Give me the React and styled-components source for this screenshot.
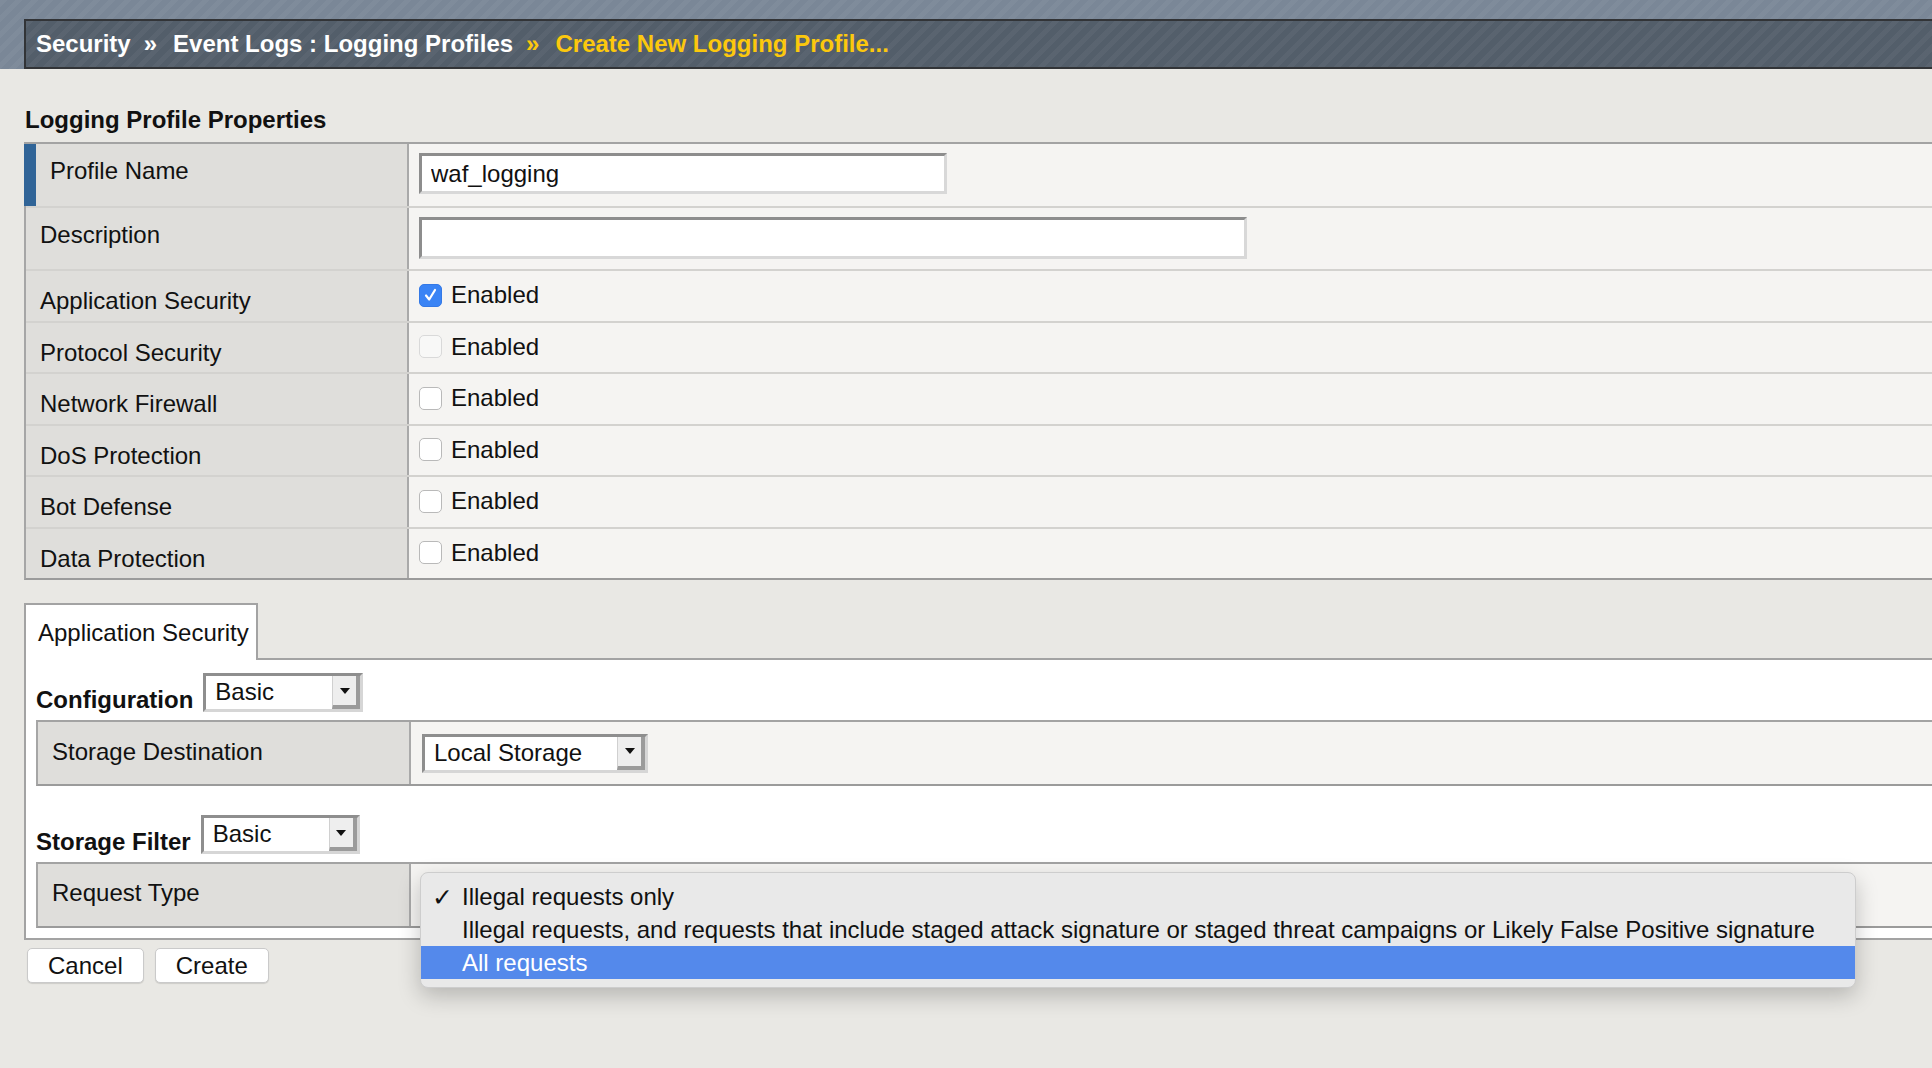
import React from 'react';
import styled, { createGlobalStyle } from 'styled-components';

const GlobalStyle = createGlobalStyle`
    html, body {
        margin: 0;
        padding: 0;
    }
    body {
        min-height: 100vh;
        background: #e9e8e4;
        font-family: "Liberation Sans", Arial, Helvetica, sans-serif;
        font-size: 24px;
        color: #111;
    }
    #root {
        min-height: 100vh;
    }
`;

const stripes = 'repeating-linear-gradient(135deg, rgba(255,255,255,0.04) 0 5px, rgba(255,255,255,0) 5px 11px)';

const Header = styled.header`
    height: 69px;
    box-sizing: border-box;
    padding: 19px 0 0 24px;
    background: ${stripes}, #7a8797;
`;

const Crumbs = styled.nav`
    height: 50px;
    box-sizing: border-box;
    display: flex;
    align-items: center;
    padding-left: 10px;
    background: ${stripes}, #535e6a;
    border: 2px solid #323437;
    border-right: none;
    color: #fff;
    font-weight: bold;
    white-space: nowrap;
`;

const Sep = styled.span`
    margin: 0 16px 0 13px;
    color: ${p => (p.$current ? '#fcc80d' : '#fff')};
`;

const Current = styled.span`
    color: #fcc80d;
`;

const Main = styled.main`
    padding-left: 24px;
`;

const Title = styled.h2`
    margin: 37px 0 8px 1px;
    font-size: 24px;
    line-height: 28px;
    font-weight: bold;
`;

const PropTable = styled.div`
    border-top: 2px solid #a3a3a3;
    border-left: 2px solid #a6a6a6;
    border-bottom: 2px solid #9b9b9b;
`;

const Row = styled.div`
    display: flex;
    height: ${p => p.$h}px;
    & + & {
        border-top: 2px solid #d3d2cf;
    }
`;

const Label = styled.div`
    flex: 0 0 ${p => (p.$accent ? 385 : 383)}px;
    box-sizing: border-box;
    margin-left: ${p => (p.$accent ? -2 : 0)}px;
    padding: ${p => p.$pt || 13}px 0 0 14px;
    line-height: 28px;
    background: #dfdedb;
    border-right: 2px solid #a9a9a9;
    border-left: ${p => (p.$accent ? '12px solid #306497' : 'none')};
    white-space: nowrap;
`;

const Value = styled.div`
    flex: 1;
    display: flex;
    align-items: flex-start;
    padding: ${p => p.$top}px 0 0 10px;
    background: #f5f4f2;
    line-height: 28px;
`;

const TextInput = styled.input`
    width: ${p => p.$w}px;
    height: ${p => p.$h}px;
    box-sizing: border-box;
    margin: 0;
    padding: 0 9px;
    border: 3px solid;
    border-color: #8d8d8d #d8d8d8 #d8d8d8 #8d8d8d;
    background: #fff;
    font-family: inherit;
    font-size: 24px;
    color: #111;
    outline: none;
`;

const CheckLine = styled.label`
    display: flex;
    align-items: center;
    gap: 9px;
    height: 28px;
`;

const Box = styled.span`
    width: 23px;
    height: 23px;
    box-sizing: border-box;
    border-radius: 5px;
    display: flex;
    align-items: center;
    justify-content: center;
    background: ${p => (p.$checked ? '#3a84f5' : p.$faint ? '#f8f8f7' : '#fff')};
    border: 1px solid ${p => (p.$checked ? '#3479e6' : p.$faint ? '#d9d9d9' : '#b9b9b9')};
`;

const TabSection = styled.section`
    margin-top: 23px;
`;

const TabStrip = styled.div`
    display: flex;
`;

const Tab = styled.div`
    width: 234px;
    height: 57px;
    box-sizing: border-box;
    display: flex;
    align-items: center;
    padding-left: 12px;
    background: #fff;
    border: 2px solid #a3a3a3;
    border-bottom: none;
    white-space: nowrap;
`;

const TabFiller = styled.div`
    flex: 1;
    border-bottom: 2px solid #a3a3a3;
`;

const Panel = styled.div`
    background: #fff;
    border-left: 2px solid #a3a3a3;
    border-bottom: 2px solid #a3a3a3;
    padding: 13px 0 10px 10px;
`;

const FieldLine = styled.div`
    display: flex;
    align-items: flex-end;
    gap: 10px;
    margin-top: ${p => p.$mt || 0}px;
`;

const FieldLabel = styled.span`
    font-weight: bold;
    line-height: 28px;
    margin-bottom: -2px;
`;

const SubTable = styled.div`
    margin-top: 8px;
    border-top: 2px solid #a3a3a3;
    border-left: 2px solid #a6a6a6;
    border-bottom: 2px solid #9b9b9b;
`;

const SubRow = styled.div`
    display: flex;
    height: 62px;
`;

const SubLabel = styled.div`
    flex: 0 0 373px;
    box-sizing: border-box;
    display: flex;
    align-items: center;
    padding: 0 0 ${p => p.$pb || 0}px 14px;
    background: #dfdedb;
    border-right: 2px solid #a9a9a9;
`;

const SubValue = styled.div`
    position: relative;
    flex: 1;
    display: flex;
    align-items: center;
    padding-left: 11px;
    background: #f5f4f2;
`;

const SelectBox = styled.div`
    display: inline-flex;
    align-items: stretch;
    box-sizing: border-box;
    width: ${p => p.$w}px;
    height: 39px;
    border: 3px solid;
    border-color: #8e8e8e #d6d6d6 #d6d6d6 #8e8e8e;
    background: #fff;
`;

const SelectText = styled.span`
    flex: 1;
    padding-left: 9px;
    line-height: 31px;
    white-space: nowrap;
`;

const SelectButton = styled.span`
    width: 28px;
    box-sizing: border-box;
    display: flex;
    align-items: center;
    justify-content: center;
    background: #eeeeee;
    border-left: 1px solid #d0d0d0;
    border-right: 4px solid #9b9b9b;
    border-bottom: 4px solid #9b9b9b;
`;

const Buttons = styled.div`
    display: flex;
    gap: 11px;
    margin: 8px 0 0 3px;
`;

const Button = styled.button`
    height: 35px;
    padding: 0 20px;
    background: #fff;
    border: 1px solid #cacaca;
    border-radius: 5px;
    box-shadow: 0 1px 1px rgba(0, 0, 0, 0.12);
    font-family: inherit;
    font-size: 24px;
    color: #111;
    line-height: 31px;
`;

const Menu = styled.ul`
    position: absolute;
    left: 9px;
    top: 8px;
    z-index: 5;
    width: 1436px;
    margin: 0;
    padding: 7px 0 8px;
    box-sizing: border-box;
    list-style: none;
    background: #e9e9e9;
    border: 1px solid #cdcdcd;
    border-radius: 8px;
    box-shadow: 0 8px 22px rgba(0, 0, 0, 0.22);
`;

const MenuItem = styled.li`
    position: relative;
    height: 33px;
    line-height: 33px;
    padding-left: 41px;
    white-space: nowrap;
    background: ${p => (p.$active ? '#5489eb' : 'transparent')};
    color: ${p => (p.$active ? '#fff' : '#111')};
`;

const Tick = styled.span`
    position: absolute;
    left: 11px;
    top: 1px;
    font-family: "DejaVu Sans", sans-serif;
    font-size: 25px;
    font-weight: bold;
`;

const Arrow = () => (
    <svg width="10" height="6" viewBox="0 0 10 6">
        <polygon points="0,0 10,0 5,6" fill="#111" />
    </svg>
);

const Select = ({ value, width }) => (
    <SelectBox $w={width}>
        <SelectText>{value}</SelectText>
        <SelectButton><Arrow /></SelectButton>
    </SelectBox>
);

const CheckBox = ({ checked, faint }) => (
    <Box $checked={checked} $faint={faint}>
        {checked && (
            <svg width="13" height="14" viewBox="0 0 13 14">
                <path d="M2 7.5 L5.2 11.5 L11 2" fill="none" stroke="#fff" strokeWidth="2.2" strokeLinecap="round" strokeLinejoin="round" />
            </svg>
        )}
    </Box>
);

const modules = [
    { name: 'Application Security', checked: true },
    { name: 'Protocol Security', faint: true },
    { name: 'Network Firewall' },
    { name: 'DoS Protection' },
    { name: 'Bot Defense' },
    { name: 'Data Protection' },
];

const requestTypes = [
    'Illegal requests only',
    'Illegal requests, and requests that include staged attack signature or staged threat campaigns or Likely False Positive signature',
    'All requests',
];

const App = () => (
    <>
        <GlobalStyle />
        <Header>
            <Crumbs>
                <span>Security</span>
                <Sep>»</Sep>
                <span>Event Logs : Logging Profiles</span>
                <Sep $current>»</Sep>
                <Current>Create New Logging Profile...</Current>
            </Crumbs>
        </Header>
        <Main>
            <Title>Logging Profile Properties</Title>
            <PropTable>
                <Row $h={62}>
                    <Label $accent>Profile Name</Label>
                    <Value $top={9}>
                        <TextInput $w={528} $h={41} defaultValue="waf_logging" />
                    </Value>
                </Row>
                <Row $h={61}>
                    <Label>Description</Label>
                    <Value $top={9}>
                        <TextInput $w={828} $h={42} defaultValue="" />
                    </Value>
                </Row>
                {modules.map(m => (
                    <Row $h={49.5} key={m.name}>
                        <Label $pt={16}>{m.name}</Label>
                        <Value $top={10}>
                            <CheckLine>
                                <CheckBox checked={m.checked} faint={m.faint} />
                                Enabled
                            </CheckLine>
                        </Value>
                    </Row>
                ))}
            </PropTable>

            <TabSection>
                <TabStrip>
                    <Tab>Application Security</Tab>
                    <TabFiller />
                </TabStrip>
                <Panel>
                    <FieldLine>
                        <FieldLabel>Configuration</FieldLabel>
                        <Select value="Basic" width={160} />
                    </FieldLine>
                    <SubTable>
                        <SubRow>
                            <SubLabel $pb={2}>Storage Destination</SubLabel>
                            <SubValue>
                                <Select value="Local Storage" width={226} />
                            </SubValue>
                        </SubRow>
                    </SubTable>
                    <FieldLine $mt={29}>
                        <FieldLabel>Storage Filter</FieldLabel>
                        <Select value="Basic" width={159} />
                    </FieldLine>
                    <SubTable>
                        <SubRow>
                            <SubLabel $pb={5}>Request Type</SubLabel>
                            <SubValue>
                                <Menu>
                                    {requestTypes.map((t, i) => (
                                        <MenuItem key={t} $active={i === 2}>
                                            {i === 0 && <Tick>✓</Tick>}
                                            {t}
                                        </MenuItem>
                                    ))}
                                </Menu>
                            </SubValue>
                        </SubRow>
                    </SubTable>
                </Panel>
            </TabSection>

            <Buttons>
                <Button>Cancel</Button>
                <Button>Create</Button>
            </Buttons>
        </Main>
    </>
);

export default App;
